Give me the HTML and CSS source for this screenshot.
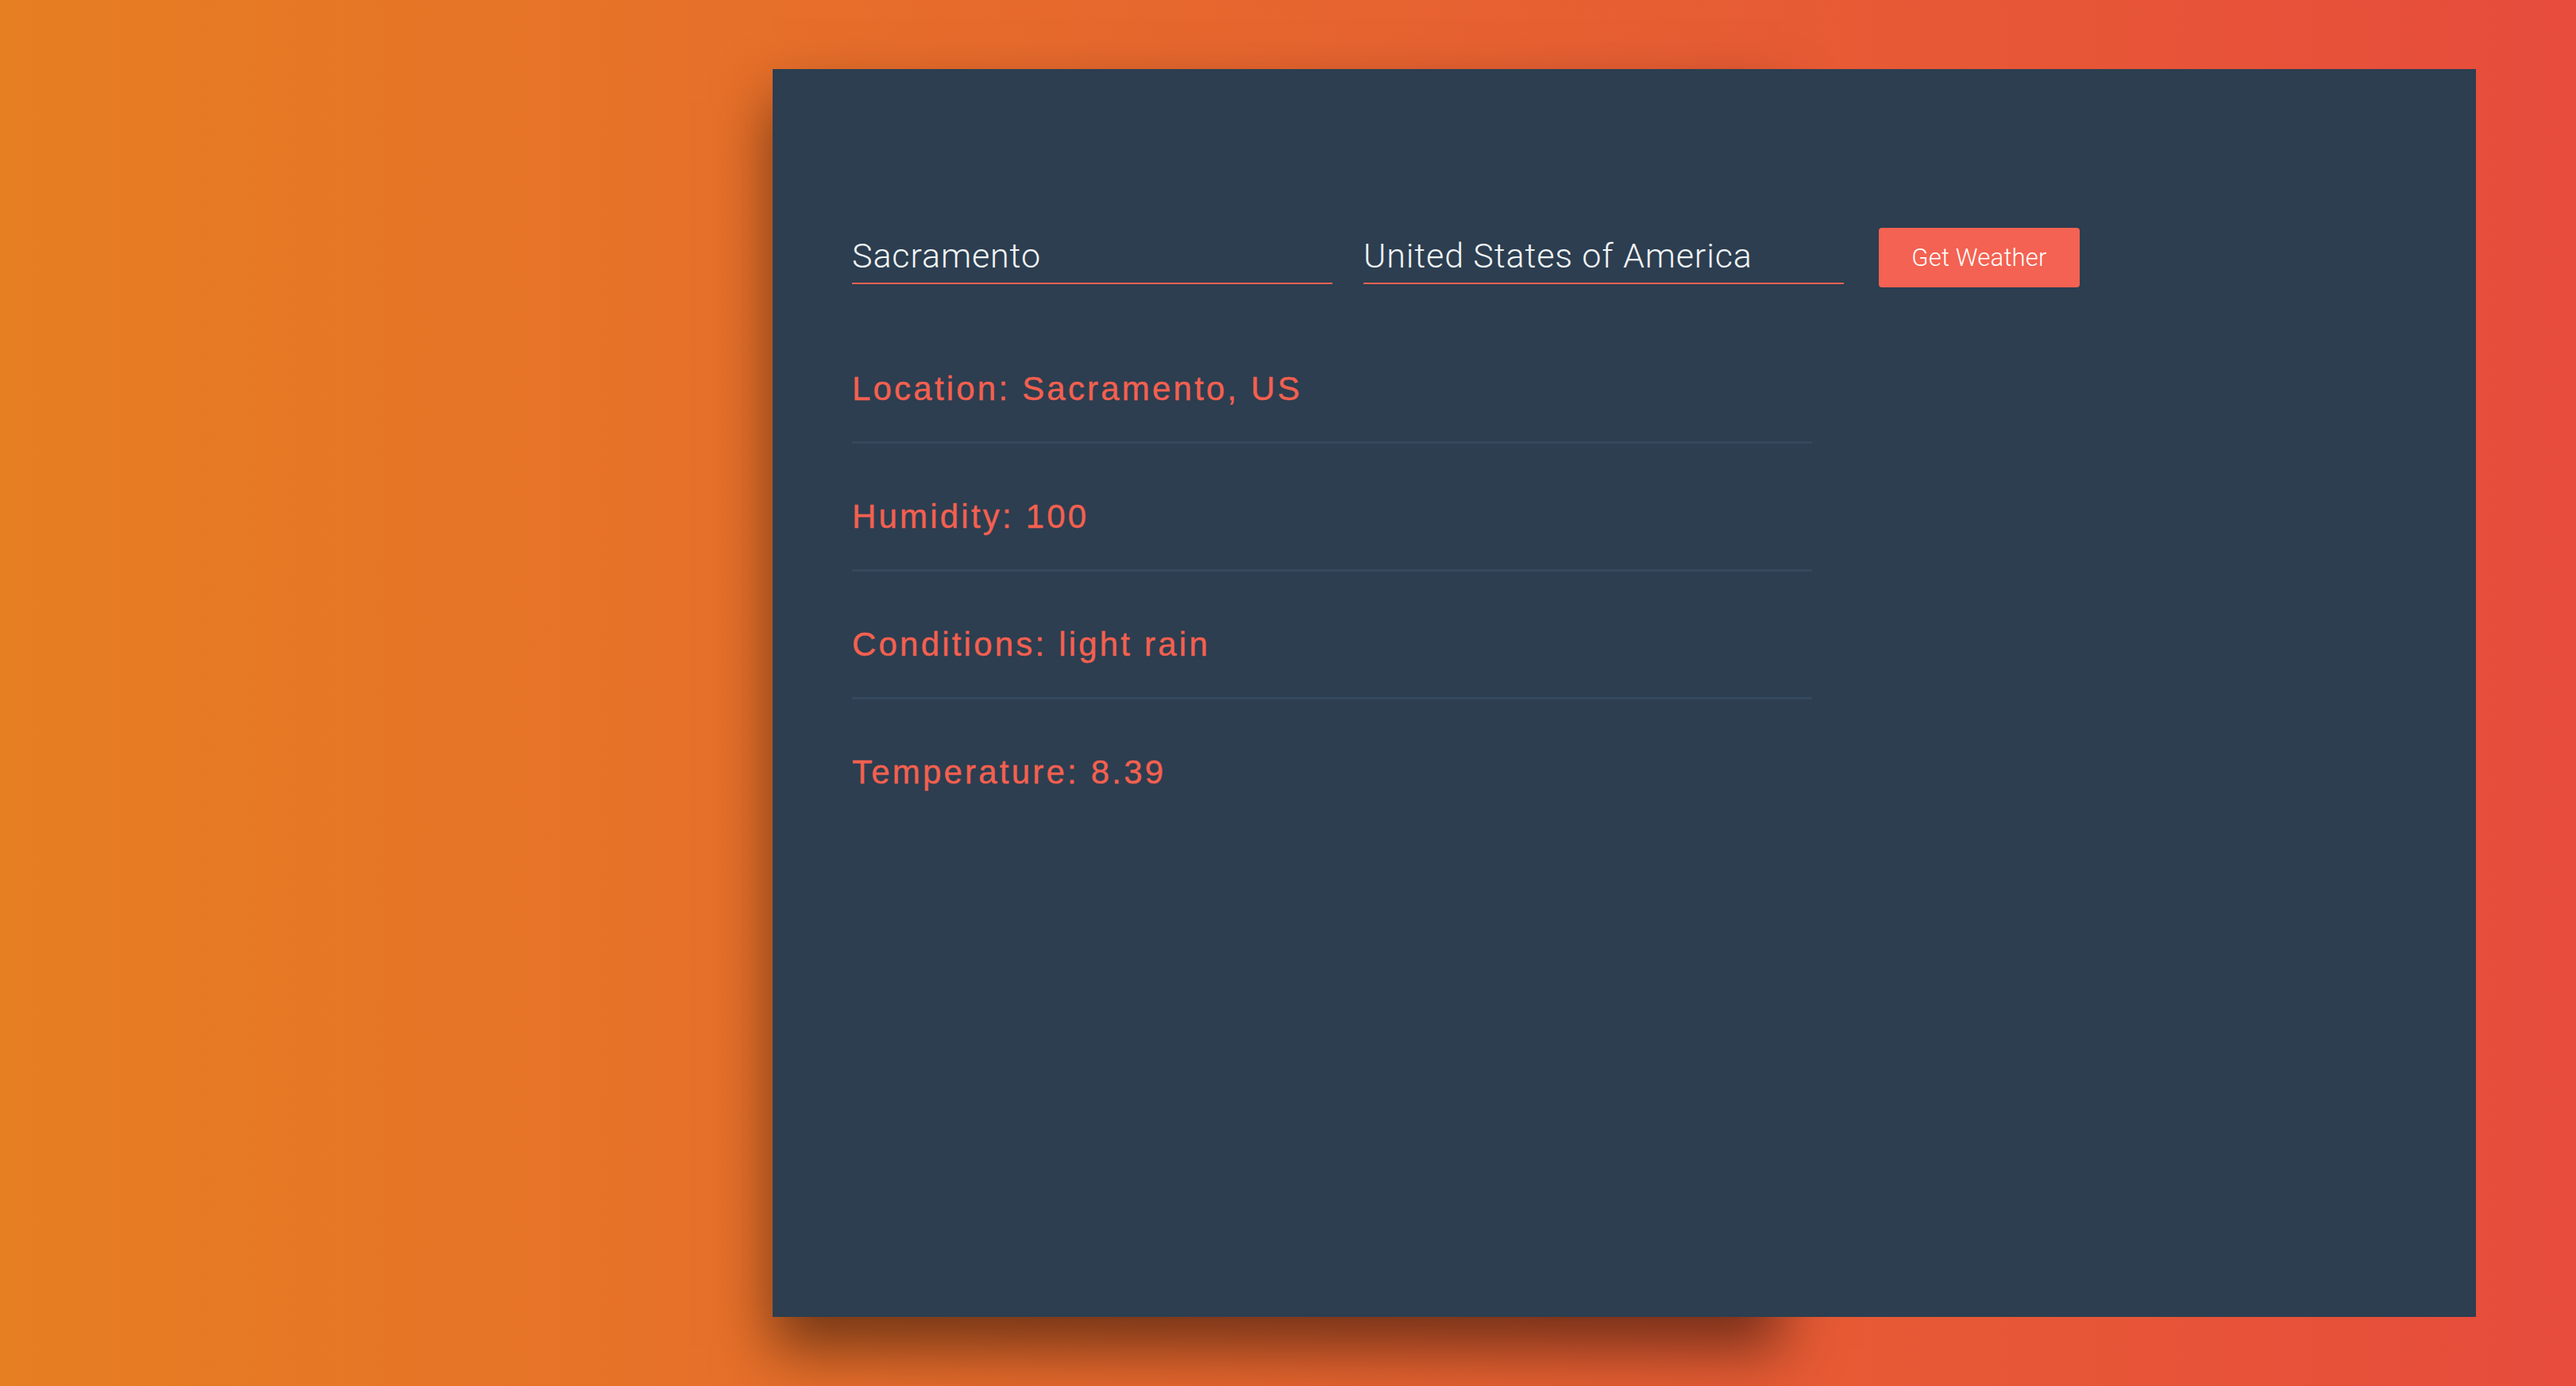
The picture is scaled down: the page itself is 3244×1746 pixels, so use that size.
FILE: index.html
```html
<!DOCTYPE html>
<html lang="en">
<head>
<meta charset="utf-8">
<title>Weather</title>
<link rel="stylesheet" href="styles.css">
</head>
<body>
  <main class="panel">
    <form class="search" onsubmit="return false;">
      <input class="field" type="text" name="city" value="Sacramento">
      <input class="field" type="text" name="country" value="United States of America">
      <button class="btn" type="submit">Get Weather</button>
    </form>
    <section class="results">
      <p class="row">Location: Sacramento, US</p>
      <p class="row">Humidity: 100</p>
      <p class="row">Conditions: light rain</p>
      <p class="row last">Temperature: 8.39</p>
    </section>
  </main>
</body>
</html>
```

FILE: styles.css
```css
html, body {
  margin: 0;
  padding: 0;
}
body {
  width: 3244px;
  height: 1746px;
  overflow: hidden;
  background: linear-gradient(to right, #e67e22 0%, #e74c3c 100%);
  font-family: "Liberation Sans", Arial, sans-serif;
  padding-top: 87px;
  padding-left: 973px;
  box-sizing: border-box;
}
.panel {
  position: relative;
  width: 2145px;
  height: 1572px;
  background: #2c3e50;
  box-sizing: border-box;
  padding: 200px 0 0 100px;
}
.panel::before {
  content: "";
  position: absolute;
  left: 0;
  top: 0;
  bottom: 0;
  width: 1270px;
  box-shadow: 0 40px 70px rgba(0, 0, 0, 0.5);
  z-index: -1;
}
.search {
  display: flex;
  align-items: flex-start;
  margin: 0;
}
.field {
  width: 605px;
  height: 71px;
  box-sizing: border-box;
  margin: 0 39px 0 0;
  padding: 0;
  border: 0;
  border-bottom: 2px solid #f26252;
  background: transparent;
  color: #f2f4f6;
  font-family: Roboto, "Liberation Sans", sans-serif;
  font-weight: 300;
  font-size: 43px;
  letter-spacing: 0.9px;
  outline: none;
}
.field + .field {
  margin-right: 44px;
}
.btn {
  height: 75px;
  width: 253px;
  padding: 0;
  border: 0;
  border-radius: 4px;
  background: #f36252;
  color: #fff;
  font-family: Roboto, "Liberation Sans", sans-serif;
  font-weight: 300;
  font-size: 31px;
  letter-spacing: 0.2px;
  cursor: pointer;
}
.results {
  margin-top: 36px;
  width: 1209px;
}
.row {
  margin: 0;
  padding: 62px 0 36px;
  font-size: 42px;
  line-height: 60px;
  letter-spacing: 3.2px;
  color: #f4604f;
  -webkit-text-stroke: 0.4px #f4604f;
  border-bottom: 3px solid #36485b;
}
.row.last {
  border-bottom: 0;
}
```
